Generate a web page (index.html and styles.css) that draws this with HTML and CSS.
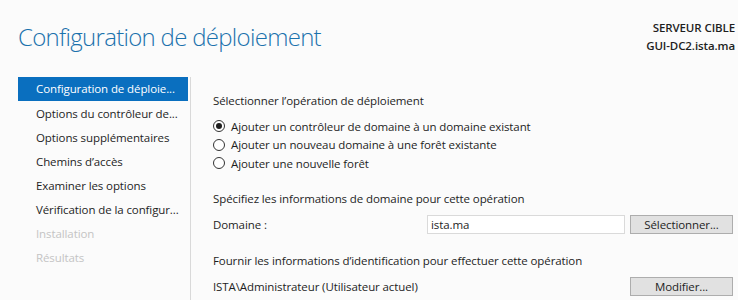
FILE: index.html
```html
<!DOCTYPE html>
<html lang="fr">
<head>
    <meta charset="UTF-8">
    <title>Configuration de déploiement</title>
    <link rel="stylesheet" href="styles.css">
</head>
<body>
    <header class="wizard-header">
        <h1 class="wizard-title">Configuration de déploiement</h1>
        <div class="target-server">
            <div class="target-label">SERVEUR CIBLE</div>
            <div class="target-name">GUI-DC2.ista.ma</div>
        </div>
    </header>

    <div class="wizard-body">
        <nav class="steps">
            <ul>
                <li class="step active">Configuration de déploie...</li>
                <li class="step">Options du contrôleur de...</li>
                <li class="step">Options supplémentaires</li>
                <li class="step">Chemins d’accès</li>
                <li class="step">Examiner les options</li>
                <li class="step">Vérification de la configur...</li>
                <li class="step disabled">Installation</li>
                <li class="step disabled">Résultats</li>
            </ul>
        </nav>

        <main class="page">
            <p class="section-title">Sélectionner l’opération de déploiement</p>
            <ul class="radio-list">
                <li><span class="radio checked"></span>Ajouter un contrôleur de domaine à un domaine existant</li>
                <li><span class="radio"></span>Ajouter un nouveau domaine à une forêt existante</li>
                <li><span class="radio"></span>Ajouter une nouvelle forêt</li>
            </ul>

            <p class="section-title spaced">Spécifiez les informations de domaine pour cette opération</p>
            <div class="field-row">
                <span class="field-label">Domaine :</span>
                <div class="text-input">ista.ma</div>
                <button class="btn">Sélectionner...</button>
            </div>

            <p class="section-title spaced">Fournir les informations d’identification pour effectuer cette opération</p>
            <div class="field-row">
                <span class="field-label grow">ISTA\Administrateur (Utilisateur actuel)</span>
                <button class="btn">Modifier...</button>
            </div>
        </main>
    </div>
</body>
</html>
```

FILE: styles.css
```css
* {
    margin: 0;
    padding: 0;
    box-sizing: border-box;
}

body {
    font-family: "Open Sans", "Noto Sans", sans-serif;
    font-size: 11.5px;
    letter-spacing: -0.1px;
    color: #1e1e1e;
    background: #fbfbfb;
    width: 738px;
    height: 300px;
    overflow: hidden;
}

ul {
    list-style: none;
}

/* en-tête */
.wizard-header {
    display: flex;
    justify-content: space-between;
    height: 77px;
    padding: 0 3px 0 18px;
}

.wizard-title {
    font-weight: 300;
    font-size: 24px;
    line-height: 1;
    color: #1b72ad;
    margin-top: 25px;
    letter-spacing: -0.7px;
}

.target-server {
    text-align: right;
    margin-top: 19px;
    line-height: 18px;
}

.target-label,
.target-name {
    font-weight: 600;
}

/* corps */
.wizard-body {
    display: flex;
    height: 223px;
}

.steps {
    width: 173px;
    margin-left: 18px;
    border-right: 1px solid #d9d9d9;
    padding-right: 2px;
}

.step {
    height: 24px;
    line-height: 24px;
    padding-left: 18px;
    white-space: nowrap;
    overflow: hidden;
}

.step.active {
    background: #0a6fbf;
    color: #fff;
    margin-bottom: 1px;
}

.step.disabled {
    color: #c4c4c4;
}

.page {
    flex: 1;
    padding: 12px 5px 0 22px;
}

.section-title {
    line-height: 24px;
}

.section-title.spaced {
    margin-top: 14px;
}

.radio-list {
    margin-top: 4px;
}

.radio-list li {
    display: flex;
    align-items: center;
    height: 18.5px;
}

.radio {
    width: 12px;
    height: 12px;
    border: 1px solid #333;
    border-radius: 50%;
    margin: 0 6px 0 0;
    display: flex;
    align-items: center;
    justify-content: center;
    background: #fff;
}

.radio.checked::after {
    content: "";
    width: 6px;
    height: 6px;
    border-radius: 50%;
    background: #1e1e1e;
}

.field-row {
    display: flex;
    align-items: center;
    gap: 5px;
    height: 20px;
    margin-top: 4px;
}

.field-label {
    width: 209px;
}

.field-label.grow {
    flex: 1;
}

.text-input {
    flex: 1;
    height: 19px;
    line-height: 17px;
    border: 1px solid #dadada;
    background: #fff;
    padding-left: 3px;
}

.btn {
    width: 103px;
    height: 19px;
    font-family: inherit;
    font-size: 11.5px;
    letter-spacing: inherit;
    color: #1e1e1e;
    background: #e1e1e1;
    border: 1px solid #adadad;
}
```
